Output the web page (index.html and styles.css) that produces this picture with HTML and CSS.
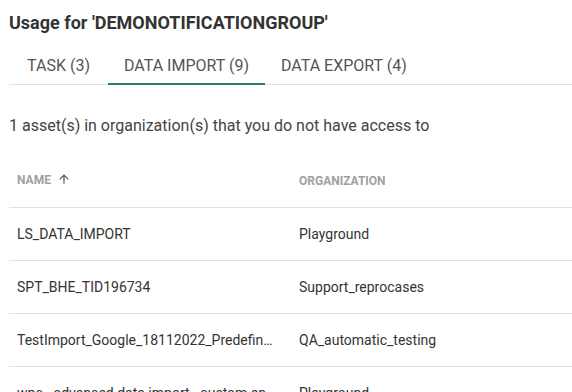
FILE: index.html
```html
<!DOCTYPE html>
<html lang="en">

<head>
    <meta charset="UTF-8">
    <title>Usage</title>
    <link rel="stylesheet" href="styles.css">
</head>

<body>
    <h1 class="title">Usage for 'DEMONOTIFICATIONGROUP'</h1>

    <div class="tabs">
        <div class="tab">TASK (3)</div>
        <div class="tab active">DATA IMPORT (9)</div>
        <div class="tab">DATA EXPORT (4)</div>
    </div>

    <p class="info">1 asset(s) in organization(s) that you do not have access to</p>

    <div class="table">
        <div class="row head">
            <div class="cell name">NAME <span class="arrow">
                <svg width="14" height="14" viewBox="0 0 24 24"><path d="M4 12l1.41 1.41L11 7.83V20h2V7.83l5.58 5.59L20 12l-8-8-8 8z" fill="#555"/></svg>
            </span></div>
            <div class="cell">ORGANIZATION</div>
        </div>
        <div class="row">
            <div class="cell name">LS_DATA_IMPORT</div>
            <div class="cell">Playground</div>
        </div>
        <div class="row">
            <div class="cell name">SPT_BHE_TID196734</div>
            <div class="cell">Support_reprocases</div>
        </div>
        <div class="row">
            <div class="cell name">TestImport_Google_18112022_Predefined_fields_mapping</div>
            <div class="cell">QA_automatic_testing</div>
        </div>
        <div class="row">
            <div class="cell name">wpc - advanced data import - custom entity</div>
            <div class="cell">Playground</div>
        </div>
    </div>
</body>

</html>
```

FILE: styles.css
```css
body {
    font-family: Roboto, sans-serif;
    margin: 0;
    padding: 0 0 0 9px;
    background: #fff;
    color: #333;
    overflow: hidden;
}

.title {
    font-size: 18px;
    font-weight: bold;
    color: #333;
    margin: 0;
    padding-top: 12px;
    line-height: 22px;
}

/* Tabs */
.tabs {
    display: flex;
    margin-top: 22px;
    border-bottom: 1px solid #e0e0e0;
}

.tab {
    min-width: 99px;
    box-sizing: border-box;
    text-align: center;
    padding: 0 16px 7px 16px;
    font-size: 16px;
    line-height: 20px;
    color: #555;
    border-bottom: 2px solid transparent;
    margin-bottom: -1px;
}

.tab.active {
    border-bottom-color: #2a7d6e;
}

.info {
    font-size: 16px;
    color: #444;
    margin: 31px 0 0 0;
    line-height: 20px;
}

/* Table */
.table {
    margin-top: 18px;
}

.row {
    display: flex;
    height: 52px;
    align-items: center;
    border-bottom: 1px solid #e0e0e0;
}

.cell {
    font-size: 14px;
    color: #333;
    white-space: nowrap;
    overflow: hidden;
    text-overflow: ellipsis;
}

.cell.name {
    width: 290px;
    box-sizing: border-box;
    padding: 0 22px 0 8px;
    flex-shrink: 0;
}

.row.head {
    height: 53px;
}

.row.head .cell {
    font-size: 12px;
    font-weight: bold;
    color: #a0a0a0;
}

.arrow {
    display: inline-block;
    vertical-align: -2px;
    margin-left: 3px;
}
```
